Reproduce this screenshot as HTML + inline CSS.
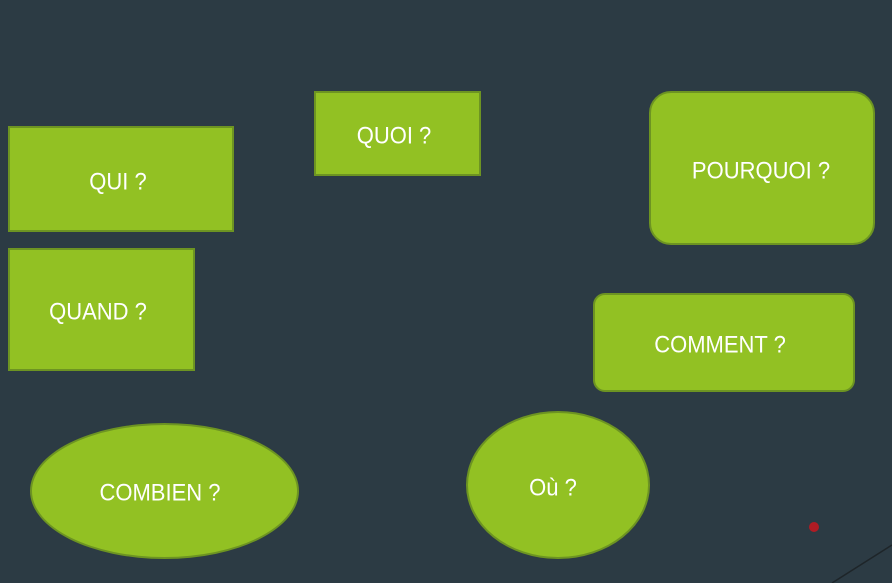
<!DOCTYPE html>
<html><head><meta charset="utf-8"><style>
html,body{margin:0;padding:0}
body{width:892px;height:583px;background:#2c3b44;position:relative;overflow:hidden;font-family:"Liberation Sans",sans-serif}
.s{position:absolute;box-sizing:border-box;background:#92c123;border:2px solid #6d9422}
.t{position:absolute;color:#fff;font-size:22px;white-space:nowrap;transform:translate(-50%,-50%) scaleY(1.08)}
</style></head><body>
<div class="s" style="left:8px;top:126px;width:226px;height:106px"></div>
<div class="s" style="left:314px;top:91px;width:167px;height:85px"></div>
<div class="s" style="left:649px;top:91px;width:226px;height:154px;border-radius:22px"></div>
<div class="s" style="left:8px;top:248px;width:187px;height:123px"></div>
<div class="s" style="left:593px;top:293px;width:262px;height:99px;border-radius:12px"></div>
<div class="s" style="left:30px;top:423px;width:269px;height:136px;border-radius:50%"></div>
<div class="s" style="left:466px;top:411px;width:184px;height:148px;border-radius:50%"></div>
<div class="t" style="left:118px;top:182px">QUI ?</div>
<div class="t" style="left:394px;top:136px">QUOI ?</div>
<div class="t" style="left:761px;top:171px">POURQUOI ?</div>
<div class="t" style="left:98px;top:312px">QUAND ?</div>
<div class="t" style="left:720px;top:345px">COMMENT ?</div>
<div class="t" style="left:160px;top:493px">COMBIEN ?</div>
<div class="t" style="left:553px;top:488px">Où ?</div>
<div style="position:absolute;left:809px;top:522px;width:10px;height:10px;border-radius:50%;background:#b01c24"></div>
<svg style="position:absolute;left:0;top:0" width="892" height="583"><line x1="832" y1="583" x2="892" y2="545" stroke="#1e2529" stroke-width="1.5"/></svg>
</body></html>
